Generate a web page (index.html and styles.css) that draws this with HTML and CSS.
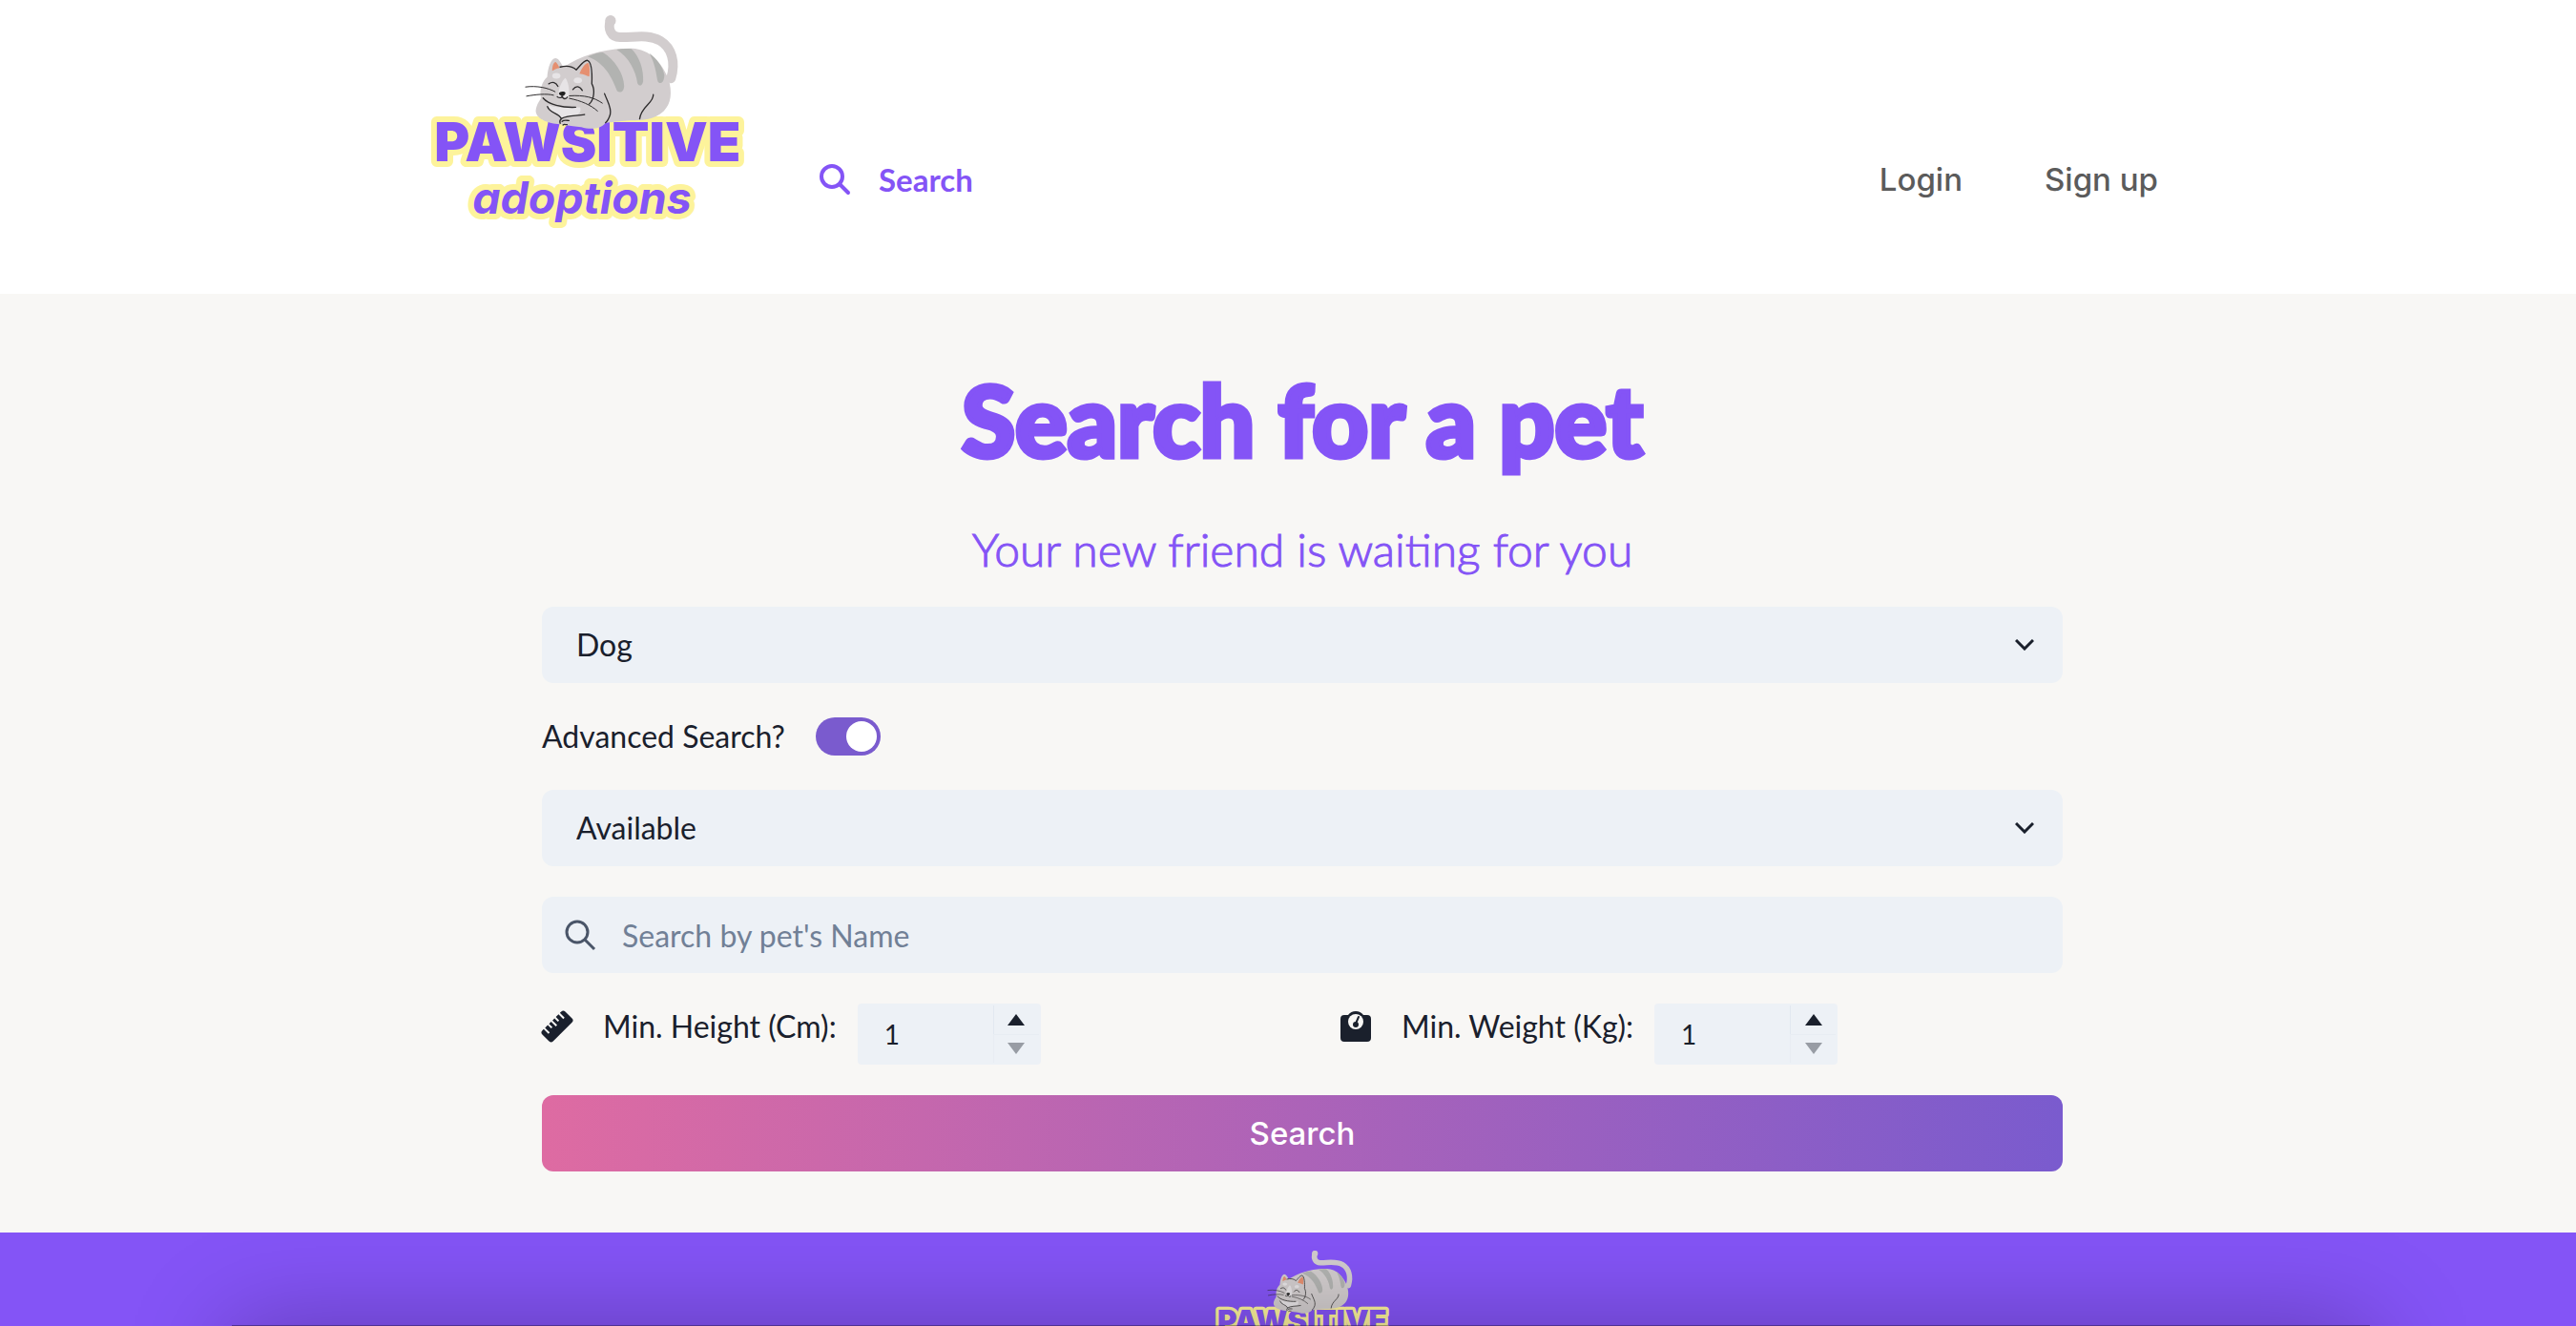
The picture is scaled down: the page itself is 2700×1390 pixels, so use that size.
FILE: index.html
```html
<!DOCTYPE html>
<html lang="en">
<head>
<meta charset="utf-8">
<meta name="viewport" content="width=device-width, initial-scale=1">
<title>Pawsitive Adoptions</title>
<link rel="stylesheet" href="styles.css">
</head>
<body>
<header class="header">
  <div class="header-inner">
    <a class="logo" href="#" aria-label="Pawsitive adoptions">
      <svg viewBox="60 40 1000 690">
        <g id="logo-art">
          <text class="word-top" x="76" y="507">PAWSITIVE</text>
          <text class="word-bottom" x="196" y="671">adoptions</text>
          <path d="M632 61C622 88 634 114 662 114C700 116 750 102 789 125C826 147 838 193 823 244" fill="none" stroke="#d2cdce" stroke-width="30" stroke-linecap="round"/>
          <circle cx="632" cy="62" r="17" fill="#d2cdce"/>
          <path d="M500 198C565 160 640 148 700 149C755 151 795 195 815 246C828 290 823 325 800 347C770 374 738 376 690 377L616 384C603 403 570 407 540 398C500 393 480 390 465 388C430 385 396 370 396 346C398 325 412 310 412 306C407 280 417 252 432 240C434 210 444 181 458 180C468 180 474 193 482 207C486 204 495 203 500 198Z" fill="#d2cdce"/>
          <path d="M522 220C535 203 546 186 559 187C573 191 574 235 573 261L560 290Z" fill="#d2cdce"/>
          <path d="M560 175C580 166 595 162 608 162C645 184 675 231 675 268C674 286 663 292 653 284C638 245 616 196 560 175ZM651 153C667 149 685 149 698 151C724 176 737 217 735 253C732 269 722 270 717 259C713 224 690 175 651 153ZM755 165C779 182 798 209 802 234C801 255 794 262 784 257C776 248 780 212 755 165Z" fill="#b2b3b1"/>
          <path d="M489 243C479 250 466 278 467 305L500 306C505 280 497 249 489 243ZM434 326C450 337 490 337 536 335C540 346 535 357 520 361C503 365 487 360 477 371C466 360 443 353 434 326Z" fill="#e7e4e6"/>
          <ellipse cx="461" cy="236" rx="13" ry="9" fill="#e7e4e6"/>
          <ellipse cx="529" cy="250" rx="13" ry="9" fill="#e7e4e6"/>
          <path d="M448 220C448 201 454 192 459 192C464 195 468 205 471 211C461 213 454 217 448 220ZM534 229C541 211 553 194 562 195C567 204 567 224 565 238C555 236 548 230 534 229Z" fill="#e58f70"/>
          <path d="M469 292C470 284 488 284 490 290C489 296 482 301 478 299C473 298 470 296 469 292Z" fill="#222"/>
          <g fill="none" stroke="#2d2b2c" stroke-width="4" stroke-linecap="round" stroke-linejoin="round">
            <path d="M473 208C493 203 511 205 524 217C538 201 549 186 559 187C573 191 574 235 573 261C583 278 581 310 565 325"/>
            <path d="M437 261C449 253 460 256 466 269M513 279C523 266 534 267 543 282M479 299C479 307 470 306 464 302M479 299C481 311 492 310 496 303"/>
            <path d="M419 306C435 326 480 337 522 335M433 333C440 355 469 352 477 372C470 376 472 383 473 386M477 371C495 359 525 363 550 358M479 380C485 374 493 377 501 377M482 391C486 387 491 391 495 390"/>
            <path d="M613 292C623 319 636 336 631 358C627 371 620 381 616 384M767 295C769 322 728 332 724 372"/>
            <g stroke-width="3"><path d="M364 271C400 266 435 274 457 286M367 300C395 295 430 291 452 297M502 299C550 296 580 304 606 322M502 307C541 315 568 327 591 347"/></g>
          </g>
        </g>
      </svg>
    </a>
    <nav class="nav">
      <a class="nav-search" href="#">
        <svg class="icon" viewBox="0 0 32 32"><circle cx="13" cy="13" r="11" fill="none" stroke="currentColor" stroke-width="4"/><path d="M21 21L30 30" stroke="currentColor" stroke-width="4" stroke-linecap="round"/></svg>
        Search
      </a>
      <div class="account">
        <a href="#">Login</a>
        <a href="#">Sign up</a>
      </div>
    </nav>
  </div>
</header>

<main class="main">
  <form class="search-form">
    <h1>Search for a pet</h1>
    <p class="subtitle">Your new friend is waiting for you</p>
    <div class="field">
      <select class="control" aria-label="Type of pet"><option>Dog</option><option>Cat</option></select>
      <svg class="chevron" viewBox="0 0 20 12"><path d="M1 1L10 10L19 1" fill="none" stroke="currentColor" stroke-width="3"/></svg>
    </div>
    <div class="toggle-row">
      <label for="advanced">Advanced Search?</label>
      <input class="switch" type="checkbox" id="advanced" checked>
    </div>
    <div class="field">
      <select class="control" aria-label="Adoption status"><option>Available</option><option>Adopted</option></select>
      <svg class="chevron" viewBox="0 0 20 12"><path d="M1 1L10 10L19 1" fill="none" stroke="currentColor" stroke-width="3"/></svg>
    </div>
    <div class="field">
      <input class="control with-icon" type="text" placeholder="Search by pet's Name" aria-label="Pet's name">
      <svg class="icon field-icon" viewBox="0 0 32 32"><circle cx="13" cy="13" r="11" fill="none" stroke="currentColor" stroke-width="3"/><path d="M21 21L31 31" stroke="currentColor" stroke-width="3"/></svg>
    </div>
    <div class="measures">
      <div class="measure">
        <svg class="icon" viewBox="0 0 32 32"><g transform="rotate(-45 16 16)"><path fill="currentColor" d="M2 8H4V15H6V8H10V13H12V8H15V15H17V8H20V13H22V8H26V15H28V8H30Q33 8 33 11V21Q33 24 30 24H2Q-1 24 -1 21V11Q-1 8 2 8Z"/></g></svg>
        <label for="height">Min. Height (Cm):</label>
        <div class="number">
          <input id="height" type="text" inputmode="numeric" value="1">
          <div class="steppers">
            <button type="button" aria-label="Increase height"><span class="up"></span></button>
            <button type="button" aria-label="Decrease height" disabled><span class="down"></span></button>
          </div>
        </div>
      </div>
      <div class="measure">
        <svg class="icon" viewBox="0 0 32 32"><path fill="currentColor" d="M4 4H8Q11 0 16 0Q21 0 24 4H28Q32 4 32 8V28Q32 32 28 32H4Q0 32 0 28V8Q0 4 4 4Z"/><circle cx="16" cy="11" r="8" fill="#f8f7f5"/><path d="M19 6L16 13" stroke="currentColor" stroke-width="2" stroke-linecap="round"/><circle cx="16" cy="14" r="3" fill="currentColor"/></svg>
        <label for="weight">Min. Weight (Kg):</label>
        <div class="number">
          <input id="weight" type="text" inputmode="numeric" value="1">
          <div class="steppers">
            <button type="button" aria-label="Increase weight"><span class="up"></span></button>
            <button type="button" aria-label="Decrease weight" disabled><span class="down"></span></button>
          </div>
        </div>
      </div>
    </div>
    <button class="submit" type="submit">Search</button>
  </form>
</main>

<footer class="footer">
  <svg class="footer-logo" viewBox="60 40 1000 690"><use href="#logo-art"/></svg>
</footer>
</body>
</html>
```
FILE: styles.css
```css
:root {
  --purple: #8454f6;
  --purple-deep: #7a5bce;
  --field: #edf1f6;
  --ink: #1a202c;
  --page: #f8f7f5;
}

* { box-sizing: border-box; }

body {
  margin: 0;
  min-height: 100vh;
  display: flex;
  flex-direction: column;
  background: var(--page);
  color: var(--ink);
  font-family: Lato, sans-serif;
  font-size: 32px;
  line-height: 48px;
  font-weight: 400;
}

a { color: inherit; text-decoration: none; }
svg { display: block; }

.header { background: #fff; padding: 14px 16px 64px; }

.header-inner {
  max-width: 1824px;
  margin: 0 auto;
  padding-left: 12px;
  display: flex;
}

.logo svg { width: 332px; height: 230px; }

.word-top {
  font: 900 170px Inter, sans-serif;
  fill: var(--purple);
  stroke: #fdf39b;
  stroke-width: 36px;
  stroke-linejoin: round;
  paint-order: stroke;
}

.word-bottom {
  font: italic 700 140px Inter, sans-serif;
  fill: var(--purple);
  stroke: #fdf39b;
  stroke-width: 36px;
  stroke-linejoin: round;
  paint-order: stroke;
}

.nav {
  flex: 1;
  display: flex;
  justify-content: space-between;
  align-items: center;
  padding: 118px 0 0 77px;
}

.nav-search {
  display: flex;
  align-items: center;
  gap: 30px;
  color: var(--purple);
  font-size: 33px;
  font-weight: 700;
}

.account {
  display: flex;
  gap: 86px;
  color: #5b5b5b;
  font-family: Inter, sans-serif;
  font-size: 33px;
  font-weight: 500;
}

.icon { width: 32px; height: 32px; flex: none; overflow: visible; }

.main { padding: 72px 16px 64px 46px; }

.search-form {
  max-width: 1594px;
  margin: 0 auto;
  display: flex;
  flex-direction: column;
  gap: 32px;
}

h1, .subtitle { margin: 0; color: var(--purple); text-align: center; }

h1 {
  font-size: 102px;
  line-height: 120px;
  font-weight: 900;
  -webkit-text-stroke: 5px var(--purple);
}

.subtitle {
  padding-top: 16px;
  font-size: 48px;
  line-height: 56px;
  font-weight: 300;
  -webkit-text-stroke: 1px var(--purple);
}

.field { position: relative; }

.control {
  display: block;
  width: 100%;
  height: 80px;
  padding: 0 36px;
  border: 0;
  border-radius: 12px;
  background: var(--field);
  color: inherit;
  font: inherit;
  appearance: none;
}

.with-icon { padding-left: 84px; }
.control::placeholder { color: #718096; opacity: 1; }

.chevron {
  position: absolute;
  right: 30px;
  top: 34px;
  width: 20px;
  height: 12px;
  pointer-events: none;
}

.field-icon { position: absolute; left: 24px; top: 24px; color: #4a5568; }

.toggle-row { display: flex; align-items: center; gap: 32px; }

.switch {
  appearance: none;
  width: 68px;
  height: 40px;
  margin: 0;
  padding: 4px;
  border-radius: 20px;
  background: #cbd5e0;
  display: flex;
}

.switch:checked { background: var(--purple-deep); justify-content: flex-end; }

.switch::before {
  content: "";
  width: 32px;
  height: 32px;
  border-radius: 50%;
  background: #fff;
}

.measures { display: grid; grid-template-columns: 1fr 1fr; column-gap: 80px; }
.measure { display: flex; align-items: flex-start; }
.measure .icon { margin: 8px 32px 0 0; }
.measure label { margin-right: 22px; }

.number {
  width: 192px;
  height: 64px;
  padding: 2px;
  display: flex;
  border-radius: 4px;
  background: var(--field);
}

.number input {
  flex: 1;
  min-width: 0;
  padding: 0 26px;
  border: 0;
  background: none;
  color: inherit;
  font: inherit;
  font-size: 28px;
}

.steppers { width: 48px; display: flex; flex-direction: column; }

.steppers button {
  flex: 1;
  display: flex;
  align-items: center;
  justify-content: center;
  padding: 0;
  border: 0;
  border-left: 1px solid #e2e8f0;
  background: none;
}

.steppers button + button { border-top: 1px solid #e2e8f0; }
.steppers button:disabled { opacity: .4; }

.up, .down { border: 9px solid transparent; }
.up { border-top: 0; border-bottom: 12px solid var(--ink); }
.down { border-bottom: 0; border-top: 12px solid var(--ink); }

.submit {
  height: 80px;
  border: 0;
  border-radius: 12px;
  background: linear-gradient(90deg, #de6ba2, var(--purple-deep));
  color: #fff;
  font: 500 33px Inter, sans-serif;
}

.footer {
  position: relative;
  flex: 1 1 98px;
  overflow: hidden;
  padding: 18px 0 0 30px;
  background: var(--purple);
}

.footer-logo { width: 184px; height: 127px; margin: 0 auto; }

/* soft shade rising from the bottom edge */
.footer::after {
  content: "";
  position: absolute;
  top: calc(100% - 1px);
  left: 9%;
  right: 8%;
  height: 400px;
  background: rgba(0, 0, 0, .4);
  box-shadow: 0 0 100px rgba(0, 0, 0, .28);
}
```
